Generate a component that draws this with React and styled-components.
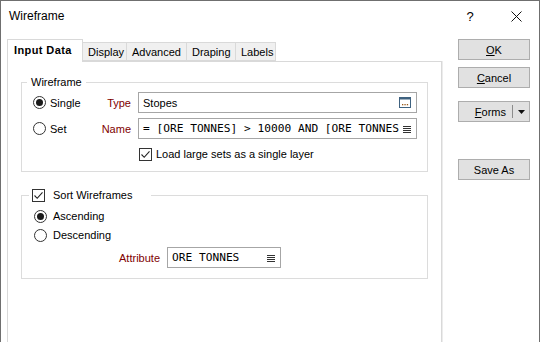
import React from "react";
import styled, { createGlobalStyle } from "styled-components";

const GlobalStyle = createGlobalStyle`
  html, body {
    margin: 0;
    padding: 0;
    background: #fff;
  }
  body {
    font-family: "Liberation Sans", Arial, sans-serif;
    font-size: 11px;
    color: #000;
  }
  * {
    box-sizing: border-box;
  }
`;

const Window = styled.div`
  width: 540px;
  height: 342px;
  border: 1px solid #6f6f6f;
  border-bottom: none;
  background: #fff;
  display: flex;
  flex-direction: column;
  overflow: hidden;
`;

const TitleBar = styled.div`
  height: 30px;
  display: flex;
  align-items: center;
  padding-left: 8px;
`;

const Title = styled.div`
  flex: 1;
  font-size: 12px;
`;

const CaptionButton = styled.div`
  width: 46px;
  height: 30px;
  display: flex;
  align-items: center;
  justify-content: center;
  font-size: 13px;
`;

const Body = styled.div`
  flex: 1;
  display: flex;
  padding: 8px 0 0 6px;
  min-height: 0;
`;

const TabArea = styled.div`
  width: 435px;
  display: flex;
  flex-direction: column;
`;

const TabStrip = styled.div`
  height: 22px;
  display: flex;
  align-items: flex-end;
`;

const Tab = styled.div`
  width: ${(p) => p.w}px;
  height: ${(p) => (p.active ? 23 : 19)}px;
  margin-bottom: ${(p) => (p.active ? -1 : 0)}px;
  position: relative;
  z-index: ${(p) => (p.active ? 1 : 0)};
  display: flex;
  align-items: center;
  padding-left: ${(p) => (p.active ? 6 : 5)}px;
  padding-bottom: ${(p) => (p.active ? 3 : 0)}px;
  border: 1px solid #d9d9d9;
  border-left: ${(p) => (p.first ? "1px solid #d9d9d9" : "none")};
  border-bottom: ${(p) => (p.active ? "none" : "1px solid #d9d9d9")};
  background: ${(p) => (p.active ? "#fff" : "#f0f0f0")};
  font-weight: ${(p) => (p.active ? "bold" : "normal")};
  letter-spacing: ${(p) => (p.active ? "0.4px" : "0")};
  white-space: nowrap;
`;

const Panel = styled.div`
  flex: 1;
  border: 1px solid #d9d9d9;
  border-bottom: none;
  box-shadow: 1px 0 0 #ececec;
  padding: 12px 13px 0 13px;
`;

const Group = styled.fieldset`
  margin: ${(p) => p.mt || 0}px 0 0 0;
  border: 1px solid #dcdcdc;
  padding: ${(p) => p.pad};
  min-width: 0;
`;

const Legend = styled.legend`
  padding: ${(p) => p.pad};
  margin-left: ${(p) => p.ml}px;
  height: 16px;
  line-height: 16px;
  display: flex;
  align-items: center;
  gap: 8px;
`;

const WireGrid = styled.div`
  display: grid;
  grid-template-columns: 58px 47px 279px;
  grid-template-rows: 21px 21px 16px;
  row-gap: 5px;
  align-items: center;
`;

const CheckRow = styled.div`
  grid-column: 3;
  margin-top: 4px;
  display: flex;
  align-items: center;
  gap: 4px;
  padding-left: 1px;
  height: 16px;
`;

const RadioRow = styled.div`
  display: flex;
  align-items: center;
  gap: ${(p) => p.gap}px;
  height: 16px;
`;

const RadioCircle = styled.div`
  width: 13px;
  height: 13px;
  border-radius: 50%;
  border: 1px solid #333;
  background: #fff;
  display: flex;
  align-items: center;
  justify-content: center;
  &::after {
    content: "";
    width: 7px;
    height: 7px;
    border-radius: 50%;
    background: ${(p) => (p.checked ? "#1a1a1a" : "transparent")};
  }
`;

const FieldLabel = styled.div`
  color: #800000;
  text-align: right;
  padding-right: 7px;
`;

const TextBox = styled.div`
  height: ${(p) => p.h || 21}px;
  width: ${(p) => p.w}px;
  border: 1px solid #a6a6a6;
  background: #fff;
  display: flex;
  align-items: center;
  padding: 0 5px 0 4px;
  gap: 4px;
  overflow: hidden;
`;

const BoxText = styled.div`
  flex: 1;
  white-space: nowrap;
  font-family: ${(p) =>
    p.mono ? '"DejaVu Sans Mono", "Liberation Mono", monospace' : "inherit"};
  font-size: ${(p) => (p.mono ? "11.2px" : "11px")};
`;

const CheckBox = styled.div`
  width: 13px;
  height: 13px;
  border: 1px solid #333;
  background: #fff;
  display: flex;
  align-items: center;
  justify-content: center;
  flex-shrink: 0;
`;

const SortBody = styled.div`
  display: flex;
  flex-direction: column;
  gap: 3px;
`;

const AttrRow = styled.div`
  display: flex;
  align-items: center;
  margin-top: 1px;
`;

const AttrLabel = styled(FieldLabel)`
  width: 133px;
`;

const ButtonColumn = styled.div`
  margin-left: 16px;
  width: 72px;
  display: flex;
  flex-direction: column;
`;

const Button = styled.div`
  height: 21px;
  margin-top: ${(p) => p.mt || 0}px;
  background: #e1e1e1;
  border: 1px solid #adadad;
  display: flex;
  align-items: center;
  justify-content: center;
`;

const SplitButton = styled(Button)`
  justify-content: flex-end;
`;

const SplitDivider = styled.div`
  width: 1px;
  height: 13px;
  background: #8c8c8c;
  margin-left: 6px;
`;

const SplitArrow = styled.div`
  width: 16px;
  display: flex;
  justify-content: center;
`;

const Check = () => (
  <svg width="11" height="11" viewBox="0 0 11 11">
    <path d="M1.5 5.5 L4.2 8.3 L9.5 2.3" fill="none" stroke="#222" strokeWidth="1.1" />
  </svg>
);

const MenuIcon = () => (
  <svg width="8" height="8" viewBox="0 0 8 8">
    <path d="M0 1.5H8M0 3.5H8M0 5.5H8M0 7.5H8" stroke="#333" strokeWidth="1" />
  </svg>
);

const BrowseIcon = () => (
  <svg width="12" height="11" viewBox="0 0 12 11">
    <rect x="0.5" y="0.5" width="11" height="10" fill="#fff" stroke="#3f6280" />
    <rect x="0.5" y="0.5" width="11" height="2" fill="#3f6280" />
    <rect x="3" y="7" width="1.3" height="1.3" fill="#9a5a1a" />
    <rect x="5.4" y="7" width="1.3" height="1.3" fill="#9a5a1a" />
    <rect x="7.8" y="7" width="1.3" height="1.3" fill="#9a5a1a" />
  </svg>
);

const CloseIcon = () => (
  <svg width="11" height="11" viewBox="0 0 11 11">
    <path d="M0.5 0.5L10.5 10.5M10.5 0.5L0.5 10.5" stroke="#111" strokeWidth="1" />
  </svg>
);

const DownArrow = () => (
  <svg width="7" height="4" viewBox="0 0 7 4">
    <path d="M0 0H7L3.5 4Z" fill="#111" />
  </svg>
);

const tabs = [
  { label: "Input Data", w: 76, active: true },
  { label: "Display", w: 44 },
  { label: "Advanced", w: 60 },
  { label: "Draping", w: 49 },
  { label: "Labels", w: 40 },
];

const App = () => {
  return (
    <>
      <GlobalStyle />
      <Window>
        <TitleBar>
          <Title>Wireframe</Title>
          <CaptionButton>?</CaptionButton>
          <CaptionButton>
            <CloseIcon />
          </CaptionButton>
        </TitleBar>
        <Body>
          <TabArea>
            <TabStrip>
              {tabs.map((t, i) => (
                <Tab key={t.label} w={t.w} active={t.active} first={i === 0}>
                  {t.label}
                </Tab>
              ))}
            </TabStrip>
            <Panel>
              <Group pad="2px 9px 11px 11px">
                <Legend pad="0 4px" ml={-6}>
                  Wireframe
                </Legend>
                <WireGrid>
                  <RadioRow gap={4}>
                    <RadioCircle checked />
                    Single
                  </RadioRow>
                  <FieldLabel>Type</FieldLabel>
                  <TextBox>
                    <BoxText>Stopes</BoxText>
                    <BrowseIcon />
                  </TextBox>
                  <RadioRow gap={4}>
                    <RadioCircle />
                    Set
                  </RadioRow>
                  <FieldLabel>Name</FieldLabel>
                  <TextBox>
                    <BoxText mono>= [ORE TONNES] &gt; 10000 AND [ORE TONNES</BoxText>
                    <MenuIcon />
                  </TextBox>
                  <CheckRow>
                    <CheckBox>
                      <Check />
                    </CheckBox>
                    Load large sets as a single layer
                  </CheckRow>
                </WireGrid>
              </Group>
              <Group mt={15} pad="5px 9px 10px 12px">
                <Legend pad="0 19px 0 3px" ml={-5}>
                  <CheckBox>
                    <Check />
                  </CheckBox>
                  Sort Wireframes
                </Legend>
                <SortBody>
                  <RadioRow gap={6}>
                    <RadioCircle checked />
                    Ascending
                  </RadioRow>
                  <RadioRow gap={6}>
                    <RadioCircle />
                    Descending
                  </RadioRow>
                  <AttrRow>
                    <AttrLabel>Attribute</AttrLabel>
                    <TextBox w={114}>
                      <BoxText mono>ORE TONNES</BoxText>
                      <MenuIcon />
                    </TextBox>
                  </AttrRow>
                </SortBody>
              </Group>
            </Panel>
          </TabArea>
          <ButtonColumn>
            <Button>
              <span>
                <u>O</u>K
              </span>
            </Button>
            <Button mt={7}>
              <span>
                <u>C</u>ancel
              </span>
            </Button>
            <SplitButton mt={13}>
              <span>
                <u>F</u>orms
              </span>
              <SplitDivider />
              <SplitArrow>
                <DownArrow />
              </SplitArrow>
            </SplitButton>
            <Button mt={37}>Save As</Button>
          </ButtonColumn>
        </Body>
      </Window>
    </>
  );
};

export default App;
